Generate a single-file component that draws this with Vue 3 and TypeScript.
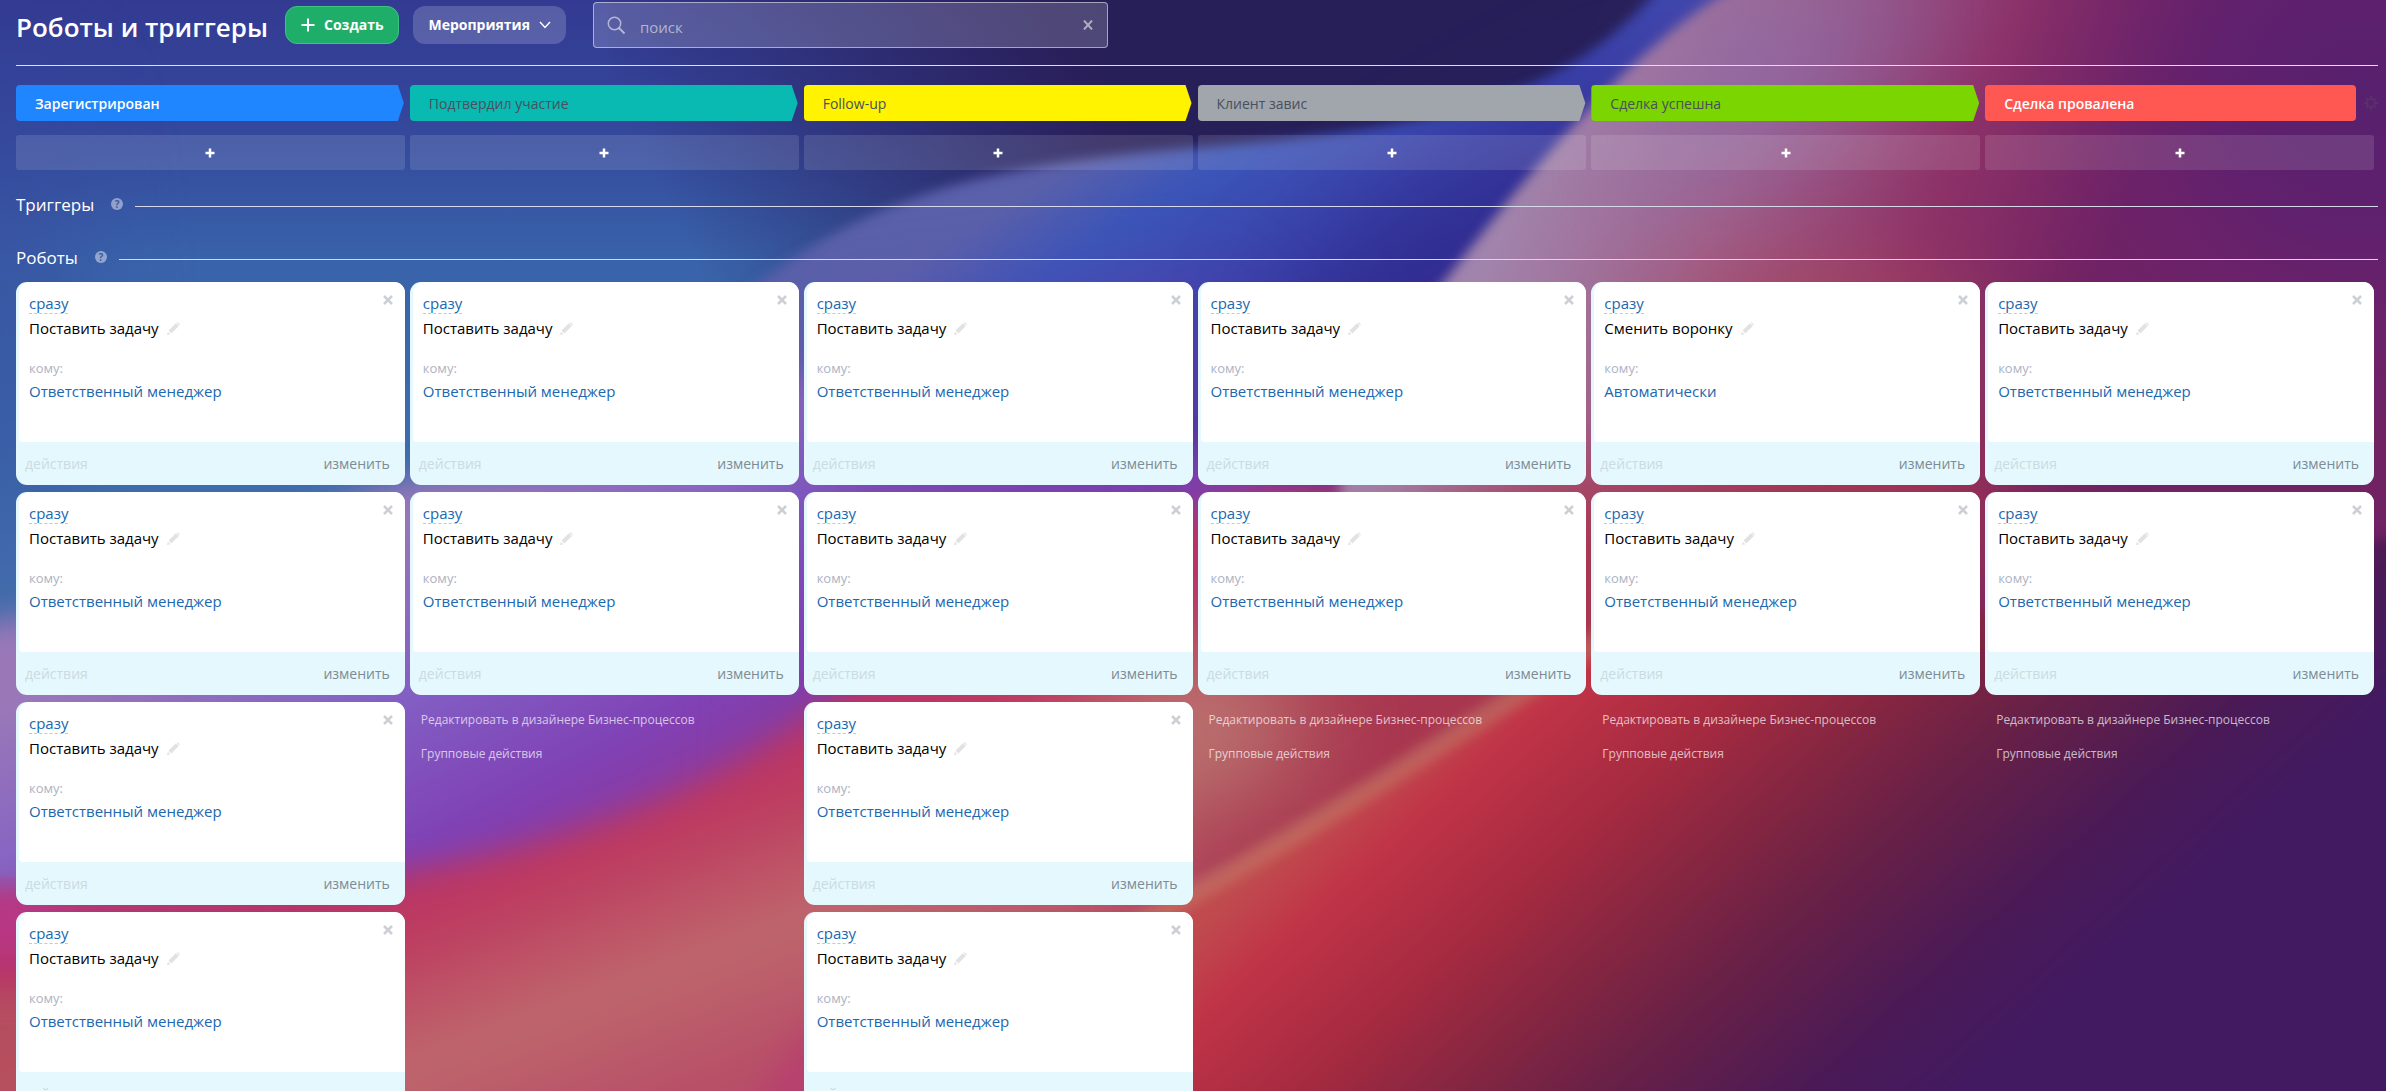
<script setup lang="ts">
interface Robot { title: string; target: string }
interface Stage { name: string; color: string; light: boolean; last: boolean; robots: Robot[] }

const task: Robot = { title: 'Поставить задачу', target: 'Ответственный менеджер' }
const funnel: Robot = { title: 'Сменить воронку', target: 'Автоматически' }

const stages: Stage[] = [
  { name: 'Зарегистрирован', color: '#1f86ff', light: true, last: false, robots: [task, task, task, task] },
  { name: 'Подтвердил участие', color: '#08bab2', light: false, last: false, robots: [task, task] },
  { name: 'Follow-up', color: '#fff300', light: false, last: false, robots: [task, task, task, task] },
  { name: 'Клиент завис', color: '#a1a6ac', light: false, last: false, robots: [task, task] },
  { name: 'Сделка успешна', color: '#7bd500', light: false, last: false, robots: [funnel, task] },
  { name: 'Сделка провалена', color: '#ff5752', light: true, last: true, robots: [task, task] },
]
</script>

<template>
  <div class="page">
    <svg class="wallpaper" viewBox="0 0 1568 717" preserveAspectRatio="none" aria-hidden="true">
      <defs>
        <filter id="b4" color-interpolation-filters="sRGB" x="-20%" y="-20%" width="140%" height="140%"><feGaussianBlur stdDeviation="4" /></filter>
        <filter id="b10" color-interpolation-filters="sRGB" x="-20%" y="-20%" width="140%" height="140%"><feGaussianBlur stdDeviation="10" /></filter>
        <filter id="b40" color-interpolation-filters="sRGB" x="-80%" y="-80%" width="260%" height="260%"><feGaussianBlur stdDeviation="36" /></filter>
        <linearGradient id="sky" x1="0" y1="0" x2="0" y2="717" gradientUnits="userSpaceOnUse">
          <stop offset="0" stop-color="#333a92" /><stop offset=".12" stop-color="#34489c" /><stop offset=".24" stop-color="#3963aa" />
          <stop offset=".4" stop-color="#3c6cae" /><stop offset="1" stop-color="#5670a8" />
        </linearGradient>
        <linearGradient id="night" x1="450" y1="160" x2="730" y2="20" gradientUnits="userSpaceOnUse">
          <stop offset="0" stop-color="#2a1f5c" stop-opacity="0" /><stop offset=".9" stop-color="#291f5a" /><stop offset="1" stop-color="#271f58" />
        </linearGradient>
        <linearGradient id="wave" x1="700" y1="110" x2="900" y2="420" gradientUnits="userSpaceOnUse">
          <stop offset="0" stop-color="#5a60aa" /><stop offset=".14" stop-color="#3b55b8" />
          <stop offset=".5" stop-color="#3a35a2" /><stop offset="1" stop-color="#7a3a98" />
        </linearGradient>
        <linearGradient id="violet" x1="300" y1="310" x2="430" y2="560" gradientUnits="userSpaceOnUse">
          <stop offset="0" stop-color="#9a78b8" /><stop offset=".4" stop-color="#8260c4" />
          <stop offset=".75" stop-color="#8040b4" /><stop offset="1" stop-color="#983890" />
        </linearGradient>
        <linearGradient id="rose" x1="380" y1="530" x2="450" y2="717" gradientUnits="userSpaceOnUse">
          <stop offset="0" stop-color="#b83468" /><stop offset=".2" stop-color="#bd3c60" />
          <stop offset=".6" stop-color="#be666c" /><stop offset="1" stop-color="#b85068" />
        </linearGradient>
        <linearGradient id="mauve" x1="1000" y1="110" x2="1350" y2="250" gradientUnits="userSpaceOnUse">
          <stop offset="0" stop-color="#a184ac" /><stop offset=".35" stop-color="#a0608a" />
          <stop offset=".7" stop-color="#8c3168" /><stop offset="1" stop-color="#702263" />
        </linearGradient>
        <linearGradient id="ember" x1="856" y1="548" x2="1138" y2="860" gradientUnits="userSpaceOnUse">
          <stop offset="0" stop-color="#c04a4e" /><stop offset=".11" stop-color="#c03347" />
          <stop offset=".3" stop-color="#a42a40" /><stop offset=".45" stop-color="#862641" />
          <stop offset=".6" stop-color="#6a2146" /><stop offset=".83" stop-color="#4a1a56" />
          <stop offset="1" stop-color="#421a62" />
        </linearGradient>
        <radialGradient id="plum" cx="1550" cy="60" r="230" gradientUnits="userSpaceOnUse">
          <stop offset="0" stop-color="#57206f" /><stop offset=".4" stop-color="#5c2070" stop-opacity=".8" />
          <stop offset="1" stop-color="#702470" stop-opacity="0" />
        </radialGradient>
      </defs>
      <rect width="1568" height="717" fill="url(#sky)" />
      <ellipse cx="0" cy="200" rx="50" ry="160" fill="#38489c" opacity=".5" filter="url(#b40)" />
      <path d="M400 -40H1250V200H400Z" fill="url(#night)" />
      <path d="M470 210C560 130 640 108 800 96C960 82 1040 60 1100 -20H1200V500H300Z" fill="url(#wave)" filter="url(#b4)" />
      <path d="M960 230L1130 0L1090 40L900 140L820 230Z" fill="#272580" opacity=".55" filter="url(#b40)" />
      <path d="M-60 410C60 420 180 340 267 316C380 300 480 310 540 230L860 320L800 600L-60 620Z" fill="url(#violet)" filter="url(#b10)" />
      <path d="M540 230L800 200L860 600L520 620Z" fill="#7540aa" opacity=".6" filter="url(#b40)" />
      <path d="M-60 588C120 586 200 582 267 573C400 550 480 510 535 468C640 390 760 330 870 320L1100 300V780H-60Z" fill="url(#rose)" filter="url(#b10)" />
      <path d="M-60 585H40V630H-60Z" fill="#b8388a" opacity=".8" filter="url(#b10)" />
      <path d="M-60 650H60V780H-60Z" fill="#b5545e" opacity=".8" filter="url(#b10)" />
      <path d="M480 740L535 670L620 740Z" fill="#b73c70" opacity=".7" filter="url(#b10)" />
      <path d="M930 210C1010 105 1080 20 1160 -20H1640V780H1000L880 320Z" fill="url(#mauve)" filter="url(#b4)" />
      <path d="M1140 -10H1300L1160 110L1060 130Z" fill="#8070b8" opacity=".5" filter="url(#b40)" />
      <ellipse cx="1200" cy="240" rx="110" ry="60" fill="#b04a58" opacity=".7" filter="url(#b40)" />
      <rect x="1300" width="268" height="300" fill="url(#plum)" />
      <path d="M770 470L1000 310L1340 300L1200 560L770 620Z" fill="#a8364f" filter="url(#b40)" />
      <ellipse cx="790" cy="480" rx="70" ry="50" fill="#be8478" opacity=".8" filter="url(#b40)" />
      <path d="M740 610C850 550 960 480 1060 420L1330 400L1640 340V780H740Z" fill="url(#ember)" filter="url(#b4)" />
      <path d="M740 612C850 552 960 482 1060 415" stroke="#c6806a" stroke-width="14" fill="none" opacity=".5" filter="url(#b4)" />
    </svg>

    <header class="top">
      <h1>Роботы и триггеры</h1>
      <button class="btn create" type="button">
        <svg width="14" height="14" viewBox="0 0 14 14"><path d="M7 0.5V13.5M0.5 7H13.5" /></svg>
        Создать
      </button>
      <button class="btn menu" type="button">
        Мероприятия
        <svg width="12" height="8" viewBox="0 0 12 8"><path d="M1 1L6 6.5L11 1" /></svg>
      </button>
      <form class="search" role="search" @submit.prevent>
        <svg width="19" height="19" viewBox="0 0 19 19"><circle cx="7.5" cy="7.5" r="6.2" /><path class="handle" d="M12 12L17.5 17.5" /></svg>
        <input type="text" placeholder="поиск" aria-label="поиск" />
        <button type="button" aria-label="Очистить">
          <svg width="10" height="10" viewBox="0 0 10 10"><path d="M1 0.5L9 9.5M9 0.5L1 9.5" /></svg>
        </button>
      </form>
    </header>

    <div class="grid stages">
      <div v-for="s in stages" :key="s.name" class="stage-cell">
        <div class="stage" :class="{ light: s.light, last: s.last }" :style="{ backgroundColor: s.color }">{{ s.name }}</div>
        <button v-if="s.last" class="gear" type="button" aria-label="Настройки">
          <svg width="14" height="14" viewBox="0 0 14 14"><circle cx="7" cy="7" r="4" /><path d="M7 0V3M7 11V14M0 7H3M11 7H14M2 2L4 4M10 10L12 12M2 12L4 10M10 4L12 2" /></svg>
        </button>
      </div>
    </div>

    <div class="grid adders">
      <button v-for="s in stages" :key="s.name" class="add" type="button" aria-label="Добавить">
        <svg width="10" height="10" viewBox="0 0 10 10"><path d="M5 0.5V9.5M0.5 5H9.5" /></svg>
      </button>
    </div>

    <div class="section">
      <h2>Триггеры</h2>
      <span class="hint">?</span>
      <i class="rule"></i>
    </div>
    <div class="section">
      <h2>Роботы</h2>
      <span class="hint">?</span>
      <i class="rule"></i>
    </div>

    <main class="grid board">
      <section v-for="s in stages" :key="s.name" class="column">
        <article v-for="(r, i) in s.robots" :key="i" class="card">
          <div class="body">
            <a class="when" href="#">сразу</a>
            <button class="close" type="button" aria-label="Удалить">
              <svg width="10" height="10" viewBox="0 0 10 10"><path d="M1 1L9 9M9 1L1 9" /></svg>
            </button>
            <div class="name">
              {{ r.title }}
              <svg width="13" height="13" viewBox="0 0 12 12"><path d="M0 12L.8 8.9L3.1 11.2ZM1.4 7.9L8.2 1.1L10.9 3.8L4.1 10.6ZM8.8 .6Q9.6 -.2 10.4 .6L11.4 1.6Q12.2 2.4 11.4 3.2Z" /></svg>
            </div>
            <div class="label">кому:</div>
            <a class="who" href="#">{{ r.target }}</a>
          </div>
          <footer>
            <a class="actions" href="#">действия</a>
            <a class="edit" href="#">изменить</a>
          </footer>
        </article>
        <nav class="links">
          <a href="#">Редактировать в дизайнере Бизнес-процессов</a>
          <a href="#">Групповые действия</a>
        </nav>
      </section>
    </main>
  </div>
</template>

<style>
html, body { height: 100%; margin: 0; }
body { overflow: hidden; }
#app { height: 100%; }
</style>

<style scoped>
.page {
  position: relative;
  height: 100%;
  overflow: hidden;
  box-sizing: border-box;
  padding: 0 8px 0 16px;
  font-family: "Open Sans", "Noto Sans", sans-serif;
  font-size: 15px;
  color: #fff;
}
.wallpaper { position: absolute; inset: 0; width: 100%; height: 100%; z-index: -1; }
button { font: inherit; color: inherit; border: 0; padding: 0; background: none; cursor: pointer; }
a { text-decoration: none; }
svg { display: block; flex: none; }
.top {
  display: flex;
  align-items: flex-start;
  height: 65px;
  border-bottom: 1px solid #dcdff0;
}
h1 { margin: 7px 17px 0 0; font-size: 26px; line-height: 40px; font-weight: 600; white-space: nowrap; }
.btn {
  display: flex;
  align-items: center;
  box-sizing: border-box;
  height: 38px;
  margin-top: 6px;
  padding: 0 15px;
  border-radius: 12px;
  font-size: 14px;
  font-weight: 700;
  line-height: 20px;
}
.create { gap: 9px; background: #1fae6a; border: 1px solid #3cc480; margin-right: 14px; }
.menu { gap: 9px; background: rgba(255, 255, 255, .18); }
.btn path, .search path, .search circle { fill: none; stroke: #fff; stroke-width: 2; }
.menu path { stroke-width: 1.5; }
.search {
  display: flex;
  align-items: center;
  box-sizing: border-box;
  width: 515px;
  height: 46px;
  margin: 2px 0 0 27px;
  padding: 0 14px 0 13px;
  gap: 14px;
  border: 1px solid rgba(255, 255, 255, .5);
  border-radius: 4px;
  background: rgba(255, 255, 255, .18);
}
.search path, .search circle { stroke: rgba(255, 255, 255, .55); }
.search circle { stroke-width: 1.5; }
.search input { flex: 1; min-width: 0; border: 0; outline: 0; padding: 4px 0 0; background: none; color: #fff; font: inherit; }
.search input::placeholder { color: #b4b4cb; opacity: 1; }
.grid { display: grid; grid-template-columns: repeat(6, minmax(0, 1fr)); column-gap: 5px; margin-right: 4px; }
.stages { margin-top: 19px; }
.stage-cell { display: flex; align-items: center; justify-content: space-between; }
.stage {
  flex: 1;
  height: 36px;
  padding-left: 19px;
  border-radius: 4px;
  line-height: 38px;
  font-size: 14px;
  font-weight: 500;
  color: #48505c;
  clip-path: polygon(0 0, calc(100% - 7px) 0, calc(100% - 1px) 50%, calc(100% - 7px) 100%, 0 100%);
}
.stage.light { color: #fff; font-weight: 600; }
.stage.last { clip-path: none; }
.gear { margin: 0 -4px 0 8px; }
.gear svg { fill: none; stroke: #5a3068; stroke-width: 2; }
.adders { margin-top: 14px; margin-bottom: 10px; }
.add {
  display: flex;
  align-items: center;
  justify-content: center;
  height: 35px;
  border-radius: 3px;
  background: rgba(255, 255, 255, .12);
}
.add path { stroke: #fff; stroke-width: 2.5; }
.section { display: flex; align-items: center; height: 53px; }
h2 { margin: 0 0 4px; font-size: 17px; line-height: 24px; font-weight: 400; }
.hint {
  width: 12px;
  height: 12px;
  margin: 0 12px 5px 17px;
  border-radius: 50%;
  background: rgba(255, 255, 255, .45);
  color: #3a5aa4;
  font-size: 10px;
  line-height: 12px;
  font-weight: 700;
  text-align: center;
}
.rule { flex: 1; height: 1px; background: #d6d9ea; }
.board { align-items: start; margin-top: -4px; }
.card {
  height: 203px;
  margin-bottom: 7px;
  border-radius: 11px;
  background: #e5f8fd;
  overflow: hidden;
}
.body {
  position: relative;
  box-sizing: border-box;
  height: 160px;
  margin-left: 3px;
  padding: 11px 10px 0;
  border-radius: 10px 0 0 4px;
  background: #fff;
}
.when { display: inline-block; line-height: 20px; color: #2067b0; border-bottom: 1px dashed #b4cbe4; }
.close { position: absolute; top: 13px; right: 12px; }
.close path { stroke: #ccd0d4; stroke-width: 2.5; }
.name { display: flex; align-items: center; gap: 8px; margin-top: 3px; line-height: 22px; color: #000; }
.name svg { fill: #e2e2e2; }
.label { margin-top: 19px; font-size: 13px; line-height: 20px; color: #adb2c2; }
.who { display: block; margin-top: 1px; line-height: 24px; color: #2067b0; }
footer { display: flex; justify-content: space-between; padding: 11px 15px 0 9px; line-height: 22px; font-size: 14px; }
.actions { color: #cbdbe2; }
.edit { color: #7d8b94; }
.links { display: flex; flex-direction: column; gap: 14px; padding: 8px 11px; font-size: 12px; line-height: 20px; }
.links a { color: rgba(255, 255, 255, .7); }
</style>
